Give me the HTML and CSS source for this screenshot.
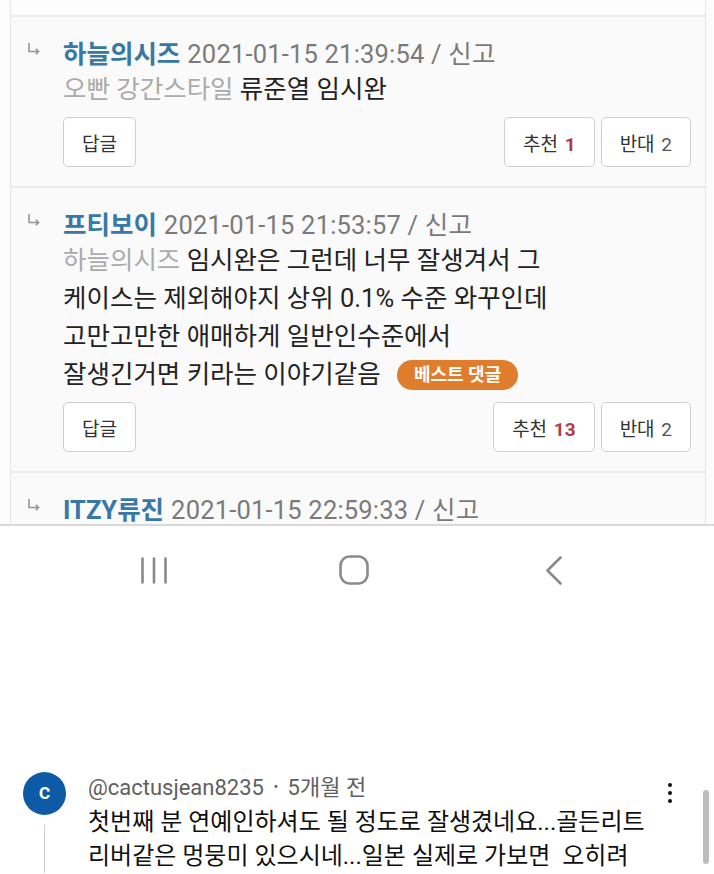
FILE: index.html
```html
<!DOCTYPE html>
<html lang="ko">
<head>
    <meta charset="UTF-8">
    <meta name="viewport" content="width=device-width, initial-scale=1.0">
    <title>댓글</title>
    <link rel="stylesheet" href="styles.css">
</head>
<body>
    <div class="board">
        <div class="card">
            <div class="comment-tail"></div>

            <div class="comment">
                <div class="meta">
                    <svg class="reply-arrow" width="12" height="12" viewBox="0 0 12 12"><path d="M1 0 V8.5 H10.5 M7.8 5.8 L10.6 8.5 L7.8 11.2" fill="none" stroke="#969696" stroke-width="1.6"/></svg>
                    <span class="name">하늘의시즈</span>
                    <span class="date">2021-01-15 21:39:54 / 신고</span>
                </div>
                <div class="text"><span class="mention">오빤 강간스타일</span> 류준열 임시완</div>
                <div class="actions">
                    <button class="btn">답글</button>
                    <div class="votes">
                        <button class="btn">추천 <b class="up">1</b></button>
                        <button class="btn">반대 <span class="down">2</span></button>
                    </div>
                </div>
            </div>

            <div class="comment">
                <div class="meta">
                    <svg class="reply-arrow" width="12" height="12" viewBox="0 0 12 12"><path d="M1 0 V8.5 H10.5 M7.8 5.8 L10.6 8.5 L7.8 11.2" fill="none" stroke="#969696" stroke-width="1.6"/></svg>
                    <span class="name">프티보이</span>
                    <span class="date">2021-01-15 21:53:57 / 신고</span>
                </div>
                <div class="text">
                    <span class="mention">하늘의시즈</span> 임시완은 그런데 너무 잘생겨서 그<br>
                    케이스는 제외해야지 상위 0.1% 수준 와꾸인데<br>
                    고만고만한 애매하게 일반인수준에서<br>
                    잘생긴거면 키라는 이야기같음 <span class="best">베스트 댓글</span>
                </div>
                <div class="actions">
                    <button class="btn">답글</button>
                    <div class="votes">
                        <button class="btn">추천 <b class="up">13</b></button>
                        <button class="btn">반대 <span class="down">2</span></button>
                    </div>
                </div>
            </div>

            <div class="comment">
                <div class="meta">
                    <svg class="reply-arrow" width="12" height="12" viewBox="0 0 12 12"><path d="M1 0 V8.5 H10.5 M7.8 5.8 L10.6 8.5 L7.8 11.2" fill="none" stroke="#969696" stroke-width="1.6"/></svg>
                    <span class="name">ITZY류진</span>
                    <span class="date">2021-01-15 22:59:33 / 신고</span>
                </div>
            </div>
        </div>
    </div>

    <nav class="sysnav">
        <div class="nav-slot">
            <svg width="26" height="27" viewBox="0 0 26 27"><path d="M1.5 1.5 V25.5 M13 1.5 V25.5 M24.5 1.5 V25.5" stroke="#8a8a8a" stroke-width="2.6" stroke-linecap="round"/></svg>
        </div>
        <div class="nav-slot">
            <svg width="30" height="30" viewBox="0 0 30 30"><rect x="1.5" y="1.5" width="27" height="27" rx="9" fill="none" stroke="#8a8a8a" stroke-width="2.6"/></svg>
        </div>
        <div class="nav-slot">
            <svg width="18" height="29" viewBox="0 0 18 29"><path d="M15.5 1.5 L2.5 14.5 L15.5 27.5" fill="none" stroke="#8a8a8a" stroke-width="2.6" stroke-linecap="round" stroke-linejoin="round"/></svg>
        </div>
    </nav>

    <section class="yt">
        <div class="yt-row">
            <div class="yt-side">
                <div class="avatar">c</div>
                <div class="thread"></div>
            </div>
            <div class="yt-main">
                <div class="yt-author">@cactusjean8235 <span class="dot">•</span> 5개월 전</div>
                <div class="yt-text">
                    첫번째 분 연예인하셔도 될 정도로 잘생겼네요...골든리트<br>
                    리버같은 멍뭉미 있으시네...일본 실제로 가보면&nbsp; 오히려
                </div>
            </div>
            <div class="kebab"><i></i><i></i><i></i></div>
        </div>
        <div class="scrollbar"></div>
    </section>
</body>
</html>
```

FILE: styles.css
```css
:root {
    --card-bg: #fafafa;
    --line: #ebebeb;
    --name-blue: #3878a6;
    --gray-text: #7a7a7a;
    --muted: #ababab;
    --ink: #222222;
}

body {
    margin: 0;
    background-color: #ffffff;
    font-family: Roboto, "Noto Sans CJK KR", sans-serif;
    color: var(--ink);
    overflow: hidden;
}

/* 게시판 댓글 영역 */
.board {
    height: 524px;
    overflow: hidden;
    background-color: #fcfcfc;
    border-bottom: 2px solid #d9d9d9;
}

.card {
    margin: 0 8px 0 10px;
    background-color: var(--card-bg);
    border-left: 1px solid #e6e6e6;
    border-right: 1px solid #e6e6e6;
}

.comment-tail {
    height: 15px;
    background-color: #fdfdfd;
}

.comment {
    border-top: 2px solid var(--line);
    padding: 15px 14px 19px 17px;
}

.meta {
    height: 38px;
    display: flex;
    align-items: center;
    font-size: 25.5px;
}

.reply-arrow {
    flex: none;
    margin-right: 23px;
    margin-top: -5px;
}

.name {
    color: var(--name-blue);
    font-weight: bold;
    margin-right: 7px;
}

.date {
    color: var(--gray-text);
    letter-spacing: 0.2px;
}

.text {
    padding-left: 35px;
    font-size: 25.5px;
    line-height: 38px;
}

.mention {
    color: var(--muted);
}

.best {
    display: inline-block;
    height: 30px;
    line-height: 30px;
    padding: 0 17px;
    margin-left: 10px;
    border-radius: 15px;
    background-color: #e07d2c;
    color: #ffffff;
    font-size: 18px;
    font-weight: bold;
    vertical-align: 2px;
}

.actions {
    display: flex;
    justify-content: space-between;
    margin-top: 9px;
    padding-left: 35px;
}

.votes {
    display: flex;
    gap: 6px;
}

.btn {
    height: 50px;
    padding: 0 18px;
    border: 1px solid #cfcfcf;
    border-radius: 5px;
    background-color: #ffffff;
    color: #333333;
    font-family: Roboto, "Noto Sans CJK KR", sans-serif;
    font-size: 19px;
}

.btn .up {
    color: #b23b4a;
    margin-left: 2px;
}

.btn .down {
    color: #555555;
    margin-left: 2px;
}

/* 안드로이드 하단 버튼 */
.sysnav {
    height: 88px;
    display: flex;
    justify-content: center;
    align-items: center;
    padding-right: 6px;
    background-color: #ffffff;
}

.nav-slot {
    width: 200px;
    display: flex;
    justify-content: center;
}

/* 유튜브 댓글 */
.yt {
    position: relative;
    margin-top: 158px;
}

.yt-row {
    display: flex;
    padding: 0 34px 0 23px;
}

.yt-side {
    display: flex;
    flex-direction: column;
    align-items: center;
    width: 43px;
    flex: none;
}

.avatar {
    width: 43px;
    height: 43px;
    border-radius: 50%;
    background-color: #0d5ba6;
    color: #ffffff;
    font-size: 22px;
    font-weight: 500;
    line-height: 40px;
    text-align: center;
}

.thread {
    flex: 1;
    width: 1px;
    margin-top: 10px;
    background-color: #cccccc;
}

.yt-main {
    margin-left: 22px;
    padding-top: 2px;
}

.yt-author {
    font-size: 22px;
    line-height: 26px;
    color: #606060;
}

.yt-author .dot {
    font-size: 14px;
    margin: 0 4px;
    vertical-align: 3px;
}

.yt-text {
    margin-top: 4px;
    font-size: 24px;
    line-height: 34px;
    color: #0f0f0f;
}

.kebab {
    margin-left: auto;
    margin-top: 11px;
    width: 20px;
    flex: none;
    display: flex;
    flex-direction: column;
    align-items: center;
    gap: 4px;
}

.kebab i {
    width: 4px;
    height: 4px;
    border-radius: 50%;
    background-color: #0f0f0f;
}

.scrollbar {
    position: absolute;
    right: 5px;
    top: 18px;
    width: 6px;
    height: 74px;
    border-radius: 3px;
    background-color: #bdbdbd;
}
```
